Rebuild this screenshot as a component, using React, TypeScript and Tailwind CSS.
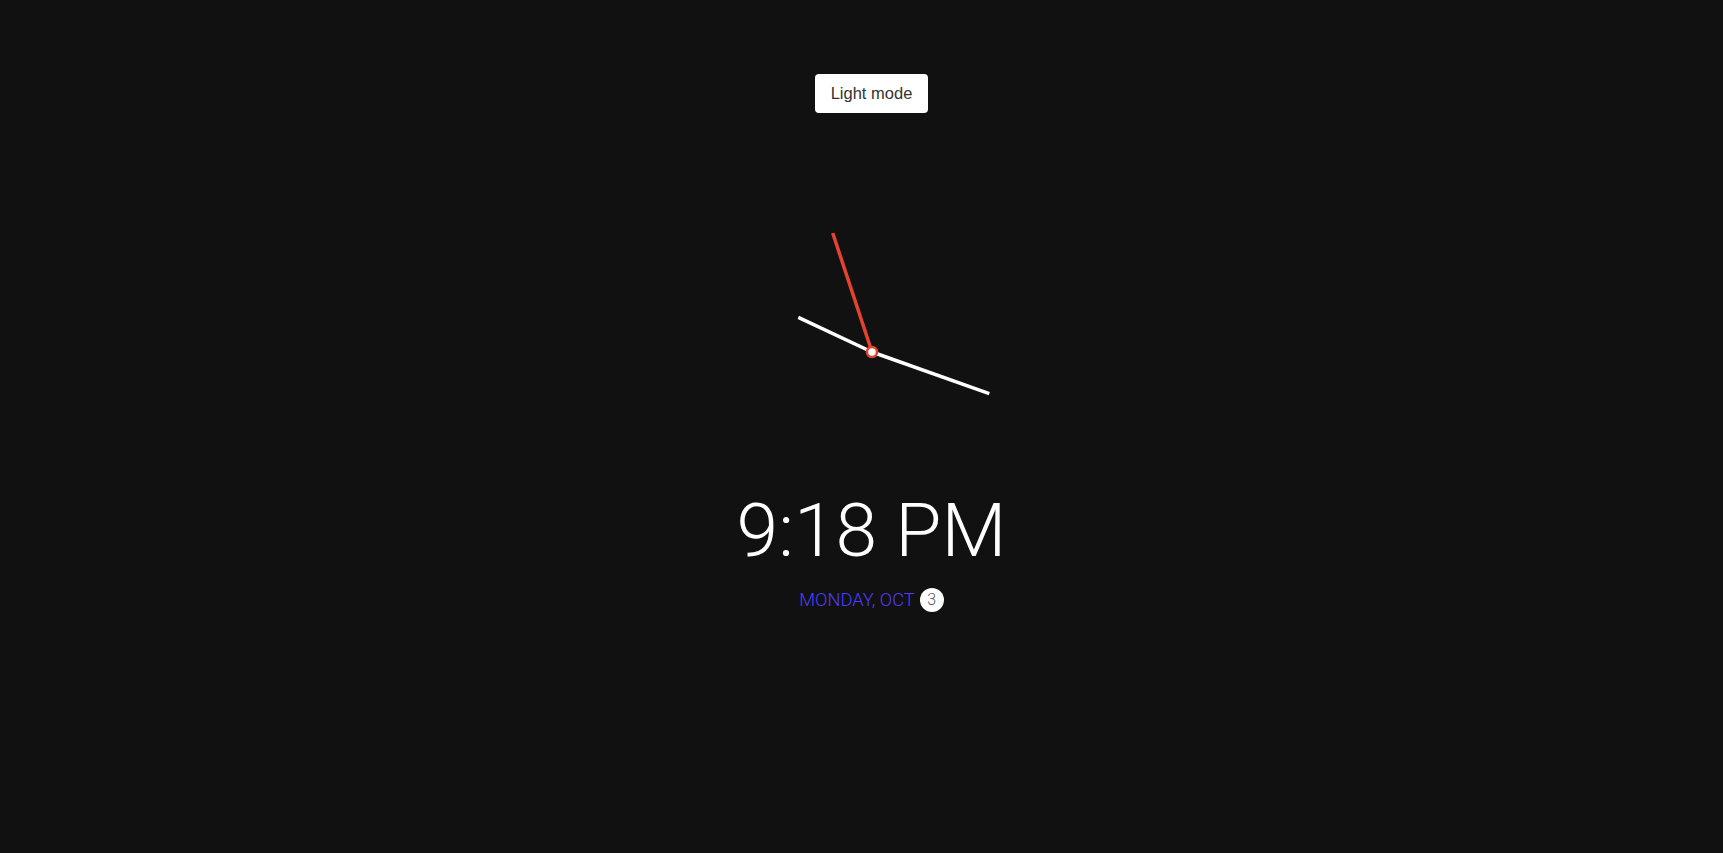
import React from 'react';

export default function App() {
  // hand end points, relative to a 280x280 face centred at 140,140
  const cx = 140;
  const cy = 140;

  return (
    <div className="min-h-screen bg-[#111111] flex flex-col items-center pl-[20px] pt-[74px]" style={{ height: 853 }}>
      {/* Theme toggle */}
      <button className="h-[39px] px-[16px] bg-white rounded-[4px] text-[16.5px] text-[#333333] font-['Liberation_Sans',Arial,sans-serif]">
        Light mode
      </button>

      {/* Analog clock */}
      <svg width="280" height="280" viewBox="0 0 280 280" className="mt-[99px] block">
        <line x1={cx} y1={cy} x2={66.3} y2={105.4} stroke="#ffffff" strokeWidth="3.5" />
        <line x1={cx} y1={cy} x2={257.3} y2={181.7} stroke="#ffffff" strokeWidth="3.5" />
        <line x1={cx} y1={cy} x2={100.7} y2={21} stroke="#e5432f" strokeWidth="3.5" />
        <circle cx={cx} cy={cy} r="5" fill="#ffffff" stroke="#e5432f" strokeWidth="2.5" />
      </svg>

      {/* Digital time */}
      <div className="text-white text-[75px] leading-[76px] font-light font-['Roboto',sans-serif]">
        9:18 PM
      </div>

      {/* Date */}
      <div className="mt-[20px] flex items-center gap-[5px] font-['Roboto',sans-serif]">
        <span className="text-[18.3px] leading-[24px] font-light text-[#4f3dff]">MONDAY, OCT</span>
        <span className="w-[24px] h-[24px] rounded-full bg-white flex items-center justify-center text-[16px] font-light text-[#555a66]">
          3
        </span>
      </div>
    </div>
  );
}
